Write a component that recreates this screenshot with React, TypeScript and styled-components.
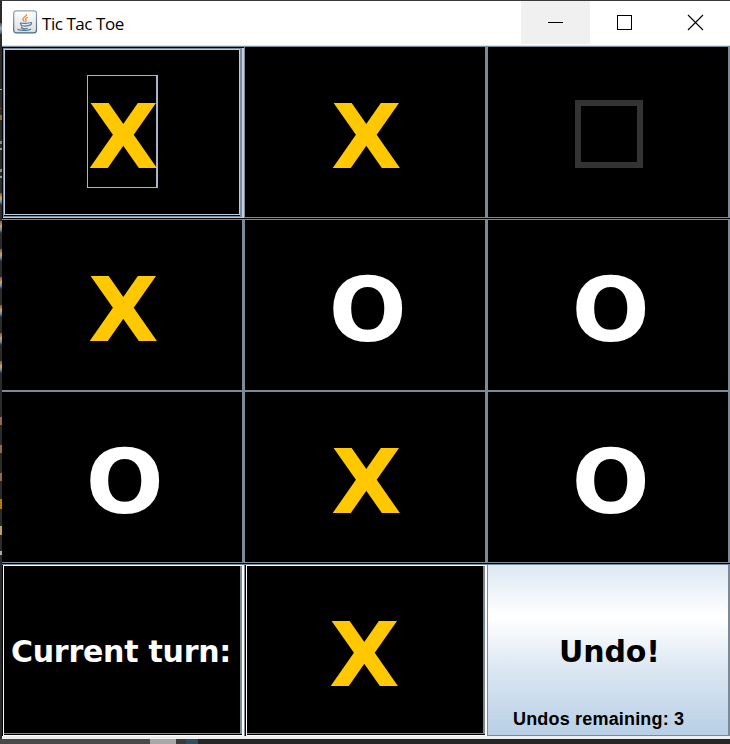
import React from "react";
import styled, { createGlobalStyle } from "styled-components";

const SLATE = "#7a8a99";
const PALE = "#b8cfe5";
const GOLD = "#ffc800";

const GlobalStyle = createGlobalStyle`
  * { box-sizing: border-box; }
  body { margin: 0; background: #2b2b2b; overflow: hidden; }
`;

const Desktop = styled.div`
  width: 730px;
  height: 744px;
  display: grid;
  grid-template-columns: 2px 728px;
  grid-template-rows: 1px 738px 5px;
  background: #2b2b2b;
`;

const TopEdge = styled.div`
  grid-column: 1 / 3;
  background: #3b383b;
`;

const CodeEdge = styled.div`
  display: flex;
  flex-direction: column;
  overflow: hidden;
`;

const Fleck = styled.i<{ $gap: number; $h: number; $fill: string }>`
  flex: none;
  margin-top: ${(p) => p.$gap}px;
  height: ${(p) => p.$h}px;
  background: ${(p) => p.$fill};
`;

const Taskbar = styled.div`
  grid-column: 1 / 3;
  display: flex;
  background: #262627;
`;

const TaskPiece = styled.div<{ $w: number; $fill: string }>`
  width: ${(p) => p.$w}px;
  background: ${(p) => p.$fill};
`;

const Window = styled.div`
  display: flex;
  flex-direction: column;
  background: #eeeeee;
`;

const TitleBar = styled.header`
  height: 45px;
  flex: none;
  display: flex;
  background: #fff;
  border-bottom: 1px solid #d9e4ef;
`;

const AppIcon = styled.svg`
  margin: 9px 0 0 11px;
  flex: none;
`;

const Title = styled.h1`
  margin: 0 auto 0 4px;
  font: 400 17px/45px "Open Sans", "Noto Sans", sans-serif;
  letter-spacing: -0.45px;
  color: #000;
  white-space: nowrap;
`;

const Control = styled.button<{ $w: number; $hover?: boolean }>`
  width: ${(p) => p.$w}px;
  height: 43px;
  padding: 0;
  border: 0;
  background: ${(p) => (p.$hover ? "#f0f0f0" : "#fff")};
  svg { display: block; }
`;

const Board = styled.main`
  display: grid;
  grid-template-columns: 243px 243px 242px;
  grid-template-rows: 173px 172px 173px 172px;
  background: #000;
`;

const Square = styled.div<{ $row: number; $last?: boolean }>`
  display: flex;
  height: ${(p) => (p.$row === 1 ? "100%" : "calc(100% - 1px)")};
  background: #000;
  border-top: 1px solid ${SLATE};
  border-right: ${(p) => (p.$last ? 2 : 3)}px solid ${SLATE};
  border-bottom: 1px solid ${SLATE};
`;

const FocusOuter = styled.div`
  display: flex;
  height: 172px;
  background: #000;
  border: solid;
  border-width: 1px 1px 0 0;
  border-color: ${SLATE};
`;

const FocusRim = styled.div`
  flex: 1;
  display: flex;
  margin: 1px 0 0 1px;
  border: solid;
  border-width: 0 2px 1px 0;
  border-color: ${PALE};
`;

const FocusShade = styled.div`
  flex: 1;
  display: flex;
  border: solid ${SLATE};
  border-width: 1px 2px 1px 1px;
`;

const FocusLine = styled.div`
  flex: 1;
  display: flex;
  margin-bottom: 1px;
  border: 1px solid ${PALE};
`;

const FocusBox = styled.div`
  width: 71px;
  height: 113px;
  margin: 25px 0 0 82px;
  border: solid #a3b8cc;
  border-width: 1px 2px 1px 1px;
  display: flex;
`;

const Mark = styled.span<{ $color: string; $x: number; $y: number }>`
  margin: ${(p) => p.$y}px 0 0 ${(p) => p.$x}px;
  height: 106px;
  flex: none;
  font: 700 89px/106px "DejaVu Sans", sans-serif;
  transform: scaleX(1.03);
  color: ${(p) => p.$color};
`;

const EmptyMark = styled.span`
  width: 68px;
  height: 68px;
  margin: 53px 0 0 87px;
  border: 6px solid #333;
`;

const StatusOuter = styled.div`
  height: 172px;
  display: flex;
  background: #000;
  border-top: 1px solid ${SLATE};
  border-right: 1px solid ${SLATE};
`;

const StatusRim = styled.div`
  flex: 1;
  display: flex;
  margin-left: 1px;
  border: solid #fff;
  border-width: 1px 2px 1px 1px;
`;

const StatusShade = styled.div`
  flex: 1;
  display: flex;
  margin-bottom: 1px;
  border: solid ${SLATE};
  border-width: 0 2px 1px 0;
`;

const Label = styled.span<{ $x: number; $y: number; $ls: number; $color: string }>`
  margin: ${(p) => p.$y}px 0 0 ${(p) => p.$x}px;
  height: 36px;
  font: 700 30px/36px "DejaVu Sans", sans-serif;
  letter-spacing: ${(p) => p.$ls}px;
  color: ${(p) => p.$color};
  white-space: nowrap;
`;

const Undo = styled.div`
  height: 172px;
  display: flex;
  flex-direction: column;
  border: solid ${SLATE};
  border-width: 1px 2px 1px 0;
  background: linear-gradient(#dde8f3 0%, #fff 30%, #fff 31%, #dde8f3 60%, #b8cfe5 100%);
`;

const Remaining = styled.span`
  margin: 39px 0 0 25px;
  font: 700 18px/21px "Liberation Sans", sans-serif;
  letter-spacing: 0.18px;
  color: #000;
  white-space: nowrap;
`;

type Player = "X" | "O" | null;
const GRID: Player[][] = [
  ["X", "X", null],
  ["X", "O", "O"],
  ["O", "X", "O"],
];

const FLECKS: [number, number, string][] = [
  [22, 11, "linear-gradient(#456, #9ab, #456)"],
  [55, 1, "#aaa"],
  [18, 1, "#8a4020"],
  [6, 5, "#966b35"],
  [21, 3, "#9a876a"],
  [4, 2, "#7fa7a0"],
  [19, 3, "#9a876a"],
  [4, 2, "#7fa7a0"],
  ...[15, 16, 16, 16, 16, 16, 16].map(
    (gap): [number, number, string] => [gap, 12, "linear-gradient(#8a5428, #d0a568 45%, #4d91bb 75%, #2b2b2b)"]
  ),
  [44, 8, "#966b45"],
  [20, 8, "#966b45"],
  [20, 8, "#966b45"],
  [18, 10, "#b87912"],
  [17, 9, "#c1a160"],
  [16, 4, "#aaa"],
];

function CupIcon() {
  return (
    <AppIcon width="25" height="25" viewBox="0 0 25 25" fill="none">
      <defs>
        <linearGradient id="tile" x1="0" y1="0" x2="0" y2="1">
          <stop offset="0" stopColor="#fff" />
          <stop offset="1" stopColor="#dcdddf" />
        </linearGradient>
        <linearGradient id="rim" x1="0" y1="0" x2="0" y2="1">
          <stop offset="0" stopColor="#91a5b3" />
          <stop offset="1" stopColor="#456579" />
        </linearGradient>
      </defs>
      <rect x="0.7" y="0.8" width="22.8" height="22" rx="2.5" fill="url(#tile)" stroke="url(#rim)" strokeWidth="1.2" />
      <path d="M13.5 4.2c.7 2.4-4.8 3.2-3.7 5.4.3.7 1.2 1.3 1.3 2M14.8 7.3c-2.5 1-2.7 1.8-1.8 2.8.5.7 0 1.3-.6 1.6" stroke="#e8822c" strokeWidth="1.2" />
      <path d="M7 12.8c2 .8 7 .8 9.3 0M7.3 13.2l1.2 2.3c2 .8 5 .7 7-.1M8.2 16.6l1 1.8c1.8.7 4 .6 5.6-.2M16.5 12.7c2.7-1 3 1.9-.8 3M5 18.8c-1.2 1.8 11.5 2.2 13 0" stroke="#547b9b" strokeWidth="1.2" />
    </AppIcon>
  );
}

function PlayerMark({ player, focused }: { player: Player; focused?: boolean }) {
  if (!player) return <EmptyMark />;
  return (
    <Mark
      $color={player === "X" ? GOLD : "#fff"}
      $x={focused ? 1 : player === "X" ? 87 : 85}
      $y={focused ? 8 : 37}
    >
      {player}
    </Mark>
  );
}

export default function App() {
  return (
    <>
      <GlobalStyle />
      <Desktop>
        <TopEdge />
        <CodeEdge>
          {FLECKS.map(([gap, h, fill], i) => (
            <Fleck key={i} $gap={gap} $h={h} $fill={fill} />
          ))}
        </CodeEdge>
        <Window>
          <TitleBar>
            <CupIcon />
            <Title>Tic Tac Toe</Title>
            <Control $w={69} $hover aria-label="Minimize">
              <svg width="69" height="43"><path d="M27 21.5h15" stroke="#000" /></svg>
            </Control>
            <Control $w={69} aria-label="Maximize">
              <svg width="69" height="43"><rect x="27.5" y="14.5" width="14" height="14" fill="none" stroke="#000" /></svg>
            </Control>
            <Control $w={71} aria-label="Close">
              <svg width="71" height="43"><path d="M29 14l15 15M44 14L29 29" stroke="#000" strokeWidth="1.1" /></svg>
            </Control>
          </TitleBar>
          <Board>
            {GRID.flatMap((row, r) =>
              row.map((player, c) =>
                r === 0 && c === 0 ? (
                  <FocusOuter key="focus">
                    <FocusRim>
                      <FocusShade>
                        <FocusLine>
                          <FocusBox>
                            <PlayerMark player={player} focused />
                          </FocusBox>
                        </FocusLine>
                      </FocusShade>
                    </FocusRim>
                  </FocusOuter>
                ) : (
                  <Square key={`${r}-${c}`} $row={r} $last={c === 2}>
                    <PlayerMark player={player} />
                  </Square>
                )
              )
            )}
            <StatusOuter>
              <StatusRim>
                <StatusShade>
                  <Label $x={7} $y={68} $ls={-0.25} $color="#fff">Current turn:</Label>
                </StatusShade>
              </StatusRim>
            </StatusOuter>
            <StatusOuter>
              <StatusRim>
                <StatusShade>
                  <Mark $color={GOLD} $x={83} $y={36}>X</Mark>
                </StatusShade>
              </StatusRim>
            </StatusOuter>
            <Undo>
              <Label $x={71} $y={69} $ls={-0.15} $color="#000">Undo!</Label>
              <Remaining>Undos remaining: 3</Remaining>
            </Undo>
          </Board>
        </Window>
        <Taskbar>
          <TaskPiece $w={150} $fill="#494949" />
          <TaskPiece $w={26} $fill="#a8a8a8" />
          <TaskPiece $w={10} $fill="#3b3b3d" />
          <TaskPiece $w={12} $fill="#29525f" />
        </Taskbar>
      </Desktop>
    </>
  );
}
